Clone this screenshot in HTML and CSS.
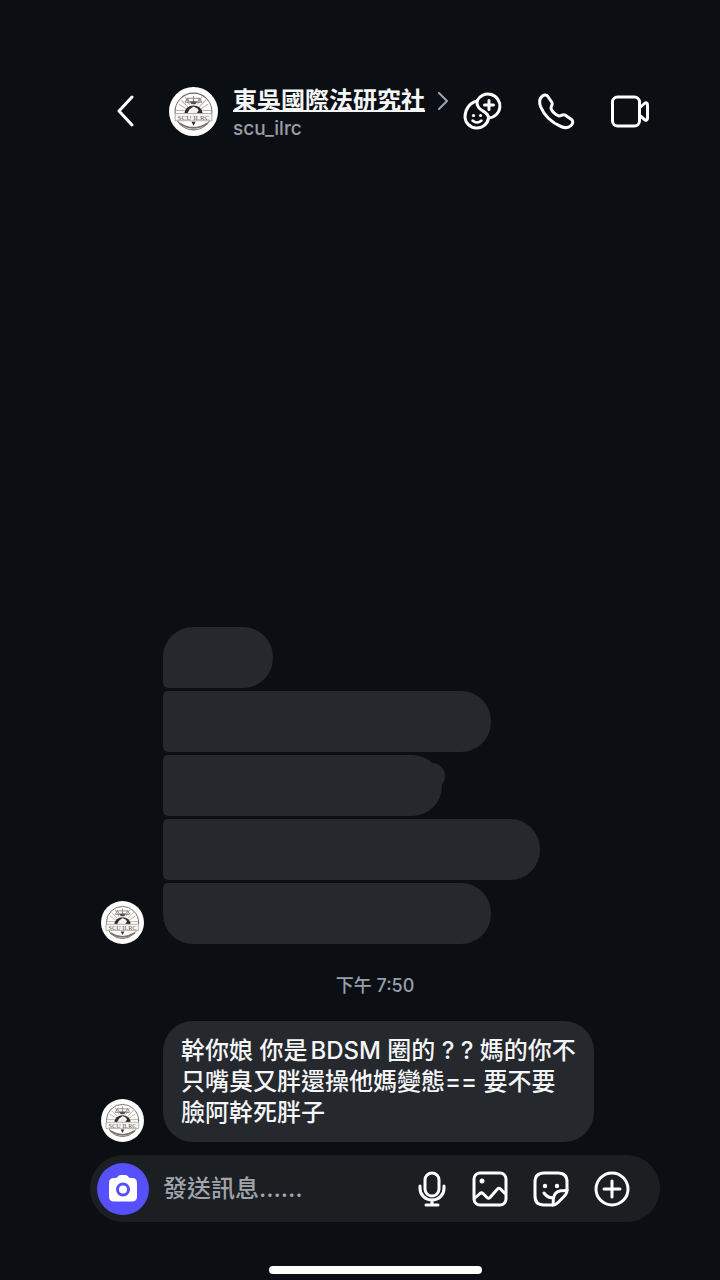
FILE: index.html
```html
<!DOCTYPE html>
<html lang="zh-Hant">
<head>
    <meta charset="UTF-8">
    <meta name="viewport" content="width=device-width, initial-scale=1">
    <title>東吳國際法研究社</title>
    <link rel="stylesheet" href="styles.css">
</head>
<body>
<svg class="defs" aria-hidden="true">
    <symbol id="logo" viewBox="0 0 48 48">
        <circle cx="24" cy="24" r="24" fill="#fff"/>
        <g fill="none" stroke="#6b6560" stroke-width="1">
            <circle cx="24" cy="24" r="18"/>
            <path d="M10 17l6 4M12 13l6 6M16 10l4 7M38 17l-6 4M36 13l-6 6M32 10l-4 7M7 23h8M33 23h8" stroke="#b5afa8"/>
            <path d="M18 11h12M24 9v7M18 11l-2 4h4zM30 11l2 4h-4z" stroke="#8d8781"/>
            <path d="M11 36q13 8 26 0" stroke="#79736d" stroke-width="2"/>
        </g>
        <path d="M20 14h8l-2 3h-4z" fill="#55504b"/>
        <path d="M15 26a9 8 0 0 1 18 0z" fill="#302a26"/>
        <path d="M18 26l2-4 4-3 4 2 1 2-2 3z" fill="#f4f1ee"/>
        <path d="M6 26h36v7H6z" fill="#f8f5f2" stroke="#b5afa8" stroke-width="1"/>
        <text x="24" y="32" text-anchor="middle" class="logo-text">SCU ILRC</text>
        <path d="M22 34h4l-2 4z" fill="#302a26"/>
    </symbol>
</svg>

<header class="header">
    <button class="icon-btn back" aria-label="返回">
        <svg width="18" height="32" viewBox="0 0 18 32"><path d="M16 2L3 16l13 14"/></svg>
    </button>
    <svg class="avatar avatar-lg" role="img" aria-label="scu_ilrc"><use href="#logo"/></svg>
    <a class="profile" href="#">
        <span class="name-row">
            <span class="name">東吳國際法研究社</span>
            <svg class="more" width="11" height="18" viewBox="0 0 11 18"><path d="M1 1l8 8-8 8"/></svg>
        </span>
        <span class="handle">scu_ilrc</span>
    </a>
    <nav class="actions">
        <button class="icon-btn" aria-label="貼圖">
            <svg width="40" height="40" viewBox="0 0 40 40">
                <path d="M15 10A12 12 0 1 1 26.500 27"/>
                <path d="M15 10C7 12 3 19 3 26a11.800 11.500 0 0 0 23.500 1C26.500 19 14 21 15 10z"/>
                <path d="M27 9.500v9M22.500 14h9"/>
                <path d="M10.500 29.500q4.500 4 9 0" stroke-width="2.500"/>
                <circle class="dot" cx="11.500" cy="24.500" r="1.600"/>
                <circle class="dot" cx="18.500" cy="24.500" r="1.600"/>
            </svg>
        </button>
        <button class="icon-btn" aria-label="語音通話">
            <svg width="40" height="40" viewBox="0 0 40 40">
                <path d="M5 6.500C7 4 10 3 11.500 5l4.500 6.500c1.200 2-1.500 4-1 6 1 3 5 7 8 7.500 2 .3 3.500-2.200 6-1l6.500 4.500c2 1.500 1.500 4-.5 6-2.500 2.500-6.500 2.500-10 1C15.500 31.500 8 24 4.500 15.500c-1.200-3.500-1.300-6.500.5-9z"/>
            </svg>
        </button>
        <button class="icon-btn" aria-label="視訊通話">
            <svg width="40" height="40" viewBox="0 0 40 40">
                <rect x="2.500" y="6" width="27" height="29" rx="5"/>
                <path d="M30 16.500l4.500-4c1.500-1.300 3-.7 3 1.200v13.600c0 1.900-1.500 2.500-3 1.200l-4.500-4"/>
            </svg>
        </button>
    </nav>
</header>

<main class="chat">
    <section class="group">
        <svg class="avatar" role="img" aria-label="scu_ilrc"><use href="#logo"/></svg>
        <div class="bubbles">
            <div class="bubble blank first w-xs"></div>
            <div class="bubble blank w-md"></div>
            <div class="bubble blank w-sm smudge"></div>
            <div class="bubble blank w-lg"></div>
            <div class="bubble blank last w-md"></div>
        </div>
    </section>
    <time class="stamp">下午 7:50</time>
    <section class="group">
        <svg class="avatar" role="img" aria-label="scu_ilrc"><use href="#logo"/></svg>
        <p class="bubble text">幹你娘 你是BDSM 圈的 ? ? 媽的你不<br>只嘴臭又胖還操他媽變態== 要不要<br>臉阿幹死胖子</p>
    </section>
</main>

<footer class="footer">
    <form class="composer">
        <button type="button" class="icon-btn camera" aria-label="相機">
            <svg width="30" height="30" viewBox="0 0 30 30">
                <path class="dot" d="M9.500 3l1-1.200Q11.500 1 13 1h4q1.500 0 2.500.8l1 1.200q.8 1 2 1H24q5 0 5 5v13.500q0 5-5 5H6q-5 0-5-5V9q0-5 5-5h1.500q1.200 0 2-1z"/>
                <circle cx="15" cy="15.500" r="5.500"/>
            </svg>
        </button>
        <input class="field" type="text" aria-label="發送訊息" placeholder="發送訊息……">
        <button type="button" class="icon-btn" aria-label="語音訊息">
            <svg width="30" height="36" viewBox="3 0 30 36">
                <rect x="11" y="2" width="14" height="23" rx="7"/>
                <path d="M6 15v2.500a12 11.500 0 0 0 24 0V15M18 29v5M12 34h12"/>
            </svg>
        </button>
        <button type="button" class="icon-btn" aria-label="相片">
            <svg width="36" height="36" viewBox="0 0 36 36">
                <rect x="2" y="2" width="32" height="32" rx="6"/>
                <path d="M3 27l5-4.500q1.500-1.200 3 0l4 4q1.500 1.500 3 0l7.500-8.500q1.500-1.500 3 0l4.500 4.500"/>
                <circle class="dot" cx="10" cy="10" r="2.500"/>
            </svg>
        </button>
        <button type="button" class="icon-btn" aria-label="貼圖">
            <svg width="36" height="36" viewBox="0 0 36 36">
                <path d="M20 34H11q-9 0-9-9V11q0-9 9-9h14q9 0 9 9v8c0 3-1 4.500-3 6.500l-6 6C23.500 33 22 34 20 34z"/>
                <path d="M20 34c.5-2 0-4 .5-7 .7-4 3-6.500 7-7.200 2.500-.4 4.500.2 6.500-.8"/>
                <path d="M11 22q4 5.500 9 4.500"/>
                <circle class="dot" cx="12" cy="15" r="2.200"/>
                <circle class="dot" cx="24" cy="15" r="2.200"/>
            </svg>
        </button>
        <button type="button" class="icon-btn" aria-label="更多">
            <svg width="36" height="36" viewBox="0 0 36 36">
                <circle cx="18" cy="18" r="16"/>
                <path d="M18 10v16M10 18h16"/>
            </svg>
        </button>
    </form>
    <div class="home-bar"></div>
</footer>
</body>
</html>
```
FILE: styles.css
```css
* {
    box-sizing: border-box;
}

body {
    display: flex;
    flex-direction: column;
    min-height: 100vh;
    margin: 0;
    padding: 0 60px 0 90px;
    font-family: Inter, "Noto Sans CJK TC", sans-serif;
    font-size: 24px;
    font-weight: 500;
    line-height: 31px;
    color: #f5f6f8;
    background-color: #0b0f14;
}

.defs {
    display: none;
}

.logo-text {
    font-family: "Liberation Serif", serif;
    font-size: 7px;
    font-weight: 400;
    fill: #5d5752;
}

.icon-btn {
    display: flex;
    flex: none;
    padding: 0;
    border: 0;
    background: none;
    color: #fff;
}

svg {
    fill: none;
    stroke: currentColor;
    stroke-width: 3;
    stroke-linecap: round;
    stroke-linejoin: round;
}

.dot {
    fill: currentColor;
    stroke: none;
}

.avatar {
    flex: none;
    width: 43px;
    height: 43px;
    stroke: none;
}

/* header */
.header {
    display: flex;
    align-items: center;
    padding: 79px 10px 16px 26px;
}

.avatar-lg {
    width: 49px;
    height: 49px;
    margin-left: 35px;
}

.profile {
    display: flex;
    flex-direction: column;
    margin-left: 15px;
    padding-top: 8px;
    color: #f5f6f8;
    text-decoration: none;
}

.name-row {
    display: flex;
    align-items: center;
    gap: 13px;
    line-height: 28px;
}

.name {
    font-weight: 700;
    white-space: nowrap;
    text-decoration: underline;
    text-decoration-thickness: 2px;
    text-underline-offset: 1px;
}

.more {
    stroke: #a0a4ad;
    stroke-width: 2;
}

.handle {
    font-size: 19px;
    line-height: 28px;
    color: #9a9ea8;
}

.actions {
    display: flex;
    gap: 34px;
    margin-left: auto;
}

/* messages */
.chat {
    display: flex;
    flex: 1;
    flex-direction: column;
    justify-content: flex-end;
}

.group {
    display: flex;
    align-items: flex-end;
    gap: 19px;
    padding-left: 11px;
}

.bubbles {
    display: flex;
    flex: 1;
    flex-direction: column;
    gap: 3px;
}

.bubble {
    margin: 0;
    background-color: #25282d;
    border-radius: 30px;
}

.blank {
    position: relative;
    height: 61px;
    border-radius: 5px 30px 30px 5px;
}

.first {
    border-top-left-radius: 30px;
}

.last {
    border-bottom-left-radius: 30px;
}

.w-xs { width: 110px; }
.w-sm { width: 279px; }
.w-md { width: 328px; }
.w-lg { width: 377px; }

.smudge::after {
    content: "";
    position: absolute;
    top: 8px;
    right: -3px;
    width: 26px;
    height: 26px;
    border-radius: 50%;
    background-color: #25282d;
}

.text {
    padding: 14px 18px;
    text-autospace: normal;
}

.stamp {
    margin: 32px 0 25px;
    font-size: 18px;
    line-height: 20px;
    text-align: center;
    color: #9a9ea8;
}

/* composer */
.footer {
    padding-bottom: 6px;
}

.composer {
    display: flex;
    align-items: center;
    gap: 25px;
    height: 67px;
    margin: 13px 0 44px;
    padding: 0 30px 0 7px;
    border-radius: 34px;
    background-color: #1c1f21;
}

.camera {
    align-items: center;
    justify-content: center;
    width: 52px;
    height: 52px;
    border-radius: 50%;
    background-color: #5550fb;
}

.camera circle {
    stroke: #5550fb;
}

.field {
    flex: 1;
    min-width: 0;
    height: 36px;
    margin-left: -11px;
    padding: 0;
    border: 0;
    outline: 0;
    font: inherit;
    color: #f5f6f8;
    background: none;
}

.field::placeholder {
    color: #a0a4ad;
    opacity: 1;
}

.home-bar {
    width: 213px;
    height: 8px;
    margin: 0 auto;
    border-radius: 4px;
    background-color: #fff;
}
```
